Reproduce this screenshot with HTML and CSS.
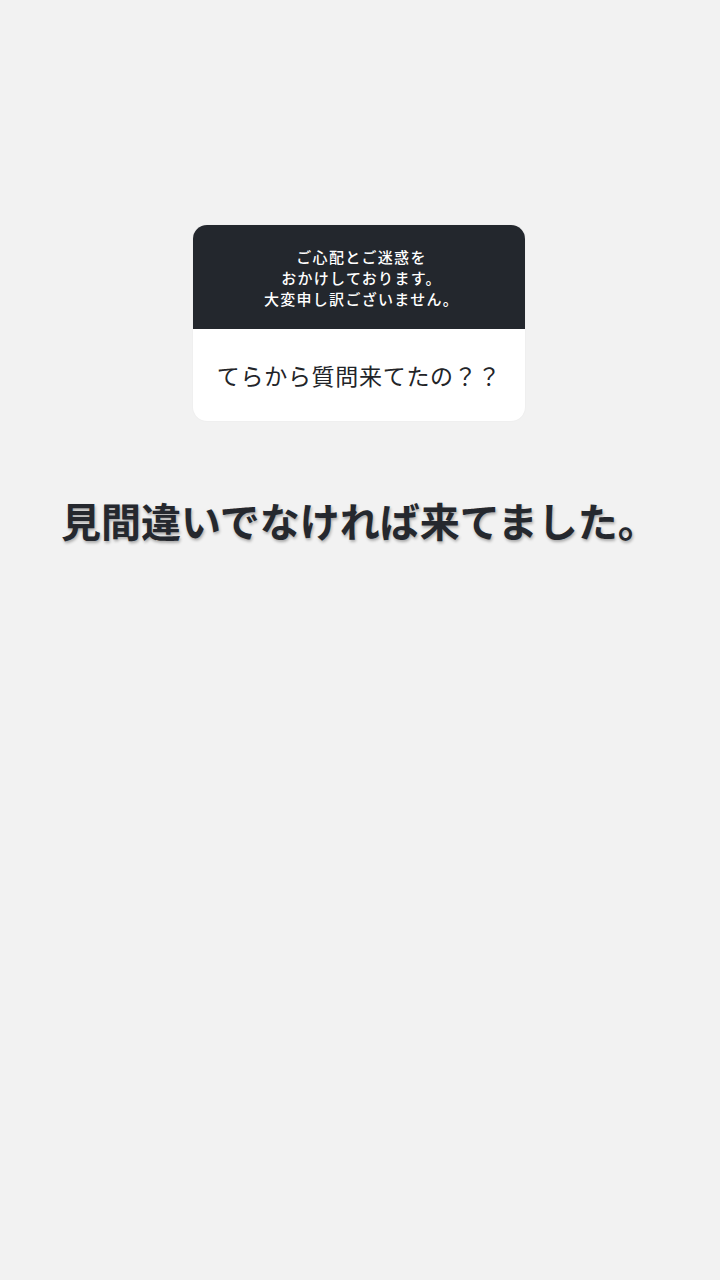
FILE: index.html
```html
<!DOCTYPE html>
<html lang="ja">
<head>
  <meta charset="UTF-8">
  <meta name="viewport" content="width=device-width, initial-scale=1">
  <title>質問</title>
  <link rel="stylesheet" href="styles.css">
</head>
<body>
  <div class="page">
    <div class="question-card">
      <div class="question-head">
        <div class="head-line">ご心配とご迷惑を</div>
        <div class="head-line">おかけしております。</div>
        <div class="head-line">大変申し訳ございません。</div>
      </div>
      <div class="question-body">てらから質問来てたの？？</div>
    </div>

    <div class="answer">見間違いでなければ来てました。</div>
  </div>
</body>
</html>
```

FILE: styles.css
```css
html, body {
  margin: 0;
  padding: 0;
  background-color: #f2f2f2;
}
body {
  font-family: "Noto Sans CJK JP", "Noto Sans", sans-serif;
  color: #25282e;
}
.page {
  width: 720px;
  height: 1280px;
  display: flex;
  flex-direction: column;
  align-items: center;
  padding-top: 225px;
  box-sizing: border-box;
}
.question-card {
  width: 332px;
  margin-left: -2px;
  border-radius: 14px;
  overflow: hidden;
  background-color: #ffffff;
  box-shadow: 0 0 2px rgba(0, 0, 0, 0.05);
}
.question-head {
  height: 104px;
  box-sizing: border-box;
  padding-top: 21px;
  background-color: #23272d;
  color: #ffffff;
  text-align: center;
  font-size: 15px;
  letter-spacing: 1.3px;
  font-weight: 500;
}
.head-line {
  height: 21px;
  line-height: 21px;
  padding-left: 5px;
}
.question-body {
  height: 92px;
  display: flex;
  align-items: center;
  justify-content: center;
  font-size: 23px;
  color: #222428;
  letter-spacing: 0.7px;
}
.answer {
  margin-top: 74px;
  align-self: flex-start;
  margin-left: 61px;
  font-size: 40px;
  line-height: 50px;
  font-weight: 700;
  color: #25282e;
  text-shadow: 1px 2px 3px rgba(0, 0, 0, 0.3);
}
```
